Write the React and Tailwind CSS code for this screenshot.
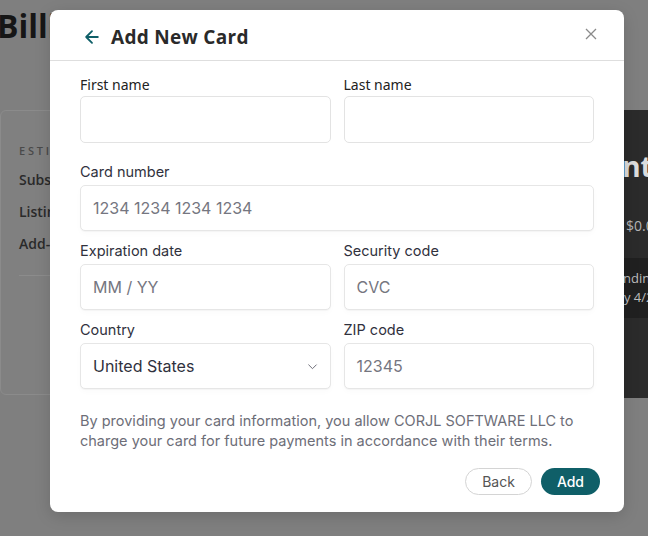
import React from "react";

const stripeFont = { fontFamily: "Inter, 'Liberation Sans', sans-serif" };

function Field({ label, placeholder, value, select }) {
  return (
    <div className="flex flex-col">
      <label className="mb-[3px] h-[20px] text-[14.5px] leading-[20px] text-[#30313d]" style={stripeFont}>
        {label}
      </label>
      <div className="flex h-[46px] items-center justify-between rounded-[5px] border border-[#e6e6e6] bg-white px-[12px] shadow-[0_1px_1px_rgba(0,0,0,0.03),0_3px_6px_rgba(0,0,0,0.02)]">
        <span
          className={`text-[16px] ${value ? "text-[#30313d]" : "text-[#757680]"}`}
          style={stripeFont}
        >
          {value || placeholder}
        </span>
        {select && (
          <svg width="13" height="13" viewBox="0 0 24 24" fill="none" stroke="#6b6b75" strokeWidth="1.8" strokeLinecap="round" strokeLinejoin="round" className="mr-[-1px]">
            <path d="M5 9l7 7 7-7" />
          </svg>
        )}
      </div>
    </div>
  );
}

function Background() {
  return (
    <div className="h-[536px] w-[648px] overflow-hidden bg-[#7f7f7f]" style={{ fontFamily: "'Open Sans', sans-serif" }}>
      <h1 className="ml-[-3px] mt-[6px] h-[40px] text-[32px] font-bold leading-[40px] text-[#161616]">Billing</h1>
      <div className="mt-[64px] flex gap-[24px]">
        <div className="h-[285px] w-[600px] shrink-0 rounded-[6px] border border-[#8b8b8b] bg-[#808080] pl-[18px] pt-[32px]">
          <p className="text-[11px] font-semibold tracking-[0.25em] text-[#4a4a4a]">ESTIMATED</p>
          <p className="mt-[9px] text-[14px] font-semibold text-[#2a2a2a]">Subscription</p>
          <p className="mt-[11px] text-[14px] font-semibold text-[#2a2a2a]">Listings</p>
          <p className="mt-[11px] text-[14px] font-semibold text-[#2a2a2a]">Add-ons</p>
          <div className="mt-[21px] mr-[20px] border-t border-[#8c8c8c]" />
        </div>
        <div className="h-[288px] w-[300px] shrink-0 bg-[#2b2b2b]">
          <p className="mt-[36px] ml-[-80px] h-[40px] text-[28px] font-bold leading-[40px] text-[#dcdcdc]">Current</p>
          <p className="mt-[30px] ml-[2px] h-[20px] text-[14px] leading-[20px] text-[#b5b5b5]">$0.00</p>
          <div className="mt-[22px] h-[60px] bg-[#202020] pt-[11px]">
            <p className="ml-[-16px] text-[13px] leading-[18px] text-[#bdbdbd]">Pending</p>
            <p className="ml-[-8px] text-[13px] leading-[20px] text-[#bdbdbd]">by 4/20</p>
          </div>
        </div>
      </div>
    </div>
  );
}

export default function App() {
  return (
    <div className="relative h-[536px] w-[648px] overflow-hidden">
      <Background />
      <div className="absolute left-[50px] top-[10px] h-[502px] w-[574px] rounded-[8px] bg-white shadow-[0_4px_16px_rgba(0,0,0,0.15)]">
        <div className="flex h-[51px] items-center justify-between border-b border-[#dedede] pl-[32px] pr-[26px]">
          <div className="flex items-center gap-[9px] pt-[4px]">
            <svg width="20" height="20" viewBox="0 0 24 24" fill="none" stroke="#0f5f68" strokeWidth="2.2" strokeLinecap="round" strokeLinejoin="round">
              <path d="M19 12H5M12 19l-7-7 7-7" />
            </svg>
            <h2 className="text-[19px] font-bold tracking-[0.3px] text-[#2a2a2a]" style={{ fontFamily: "'Open Sans', sans-serif" }}>
              Add New Card
            </h2>
          </div>
          <svg width="14" height="14" viewBox="0 0 14 14" stroke="#8a8a8a" strokeWidth="1.3" className="mb-[2px]">
            <path d="M2 2l10 10M12 2L2 12" />
          </svg>
        </div>
        <div className="px-[30px] pt-[14px]">
          <div className="grid grid-cols-2 gap-x-[13px]">
            <div className="flex flex-col">
              <label className="mb-[1px] h-[20px] text-[14px] leading-[20px] text-[#222]" style={{ fontFamily: "'Noto Sans', sans-serif" }}>
                First name
              </label>
              <div className="h-[47px] rounded-[5px] border border-[#e3e3e3] bg-white" />
            </div>
            <div className="flex flex-col">
              <label className="mb-[1px] h-[20px] text-[14px] leading-[20px] text-[#222]" style={{ fontFamily: "'Noto Sans', sans-serif" }}>
                Last name
              </label>
              <div className="h-[47px] rounded-[5px] border border-[#e3e3e3] bg-white" />
            </div>
          </div>
          <div className="mt-[19px]">
            <Field label="Card number" placeholder="1234 1234 1234 1234" />
          </div>
          <div className="mt-[10px] grid grid-cols-2 gap-x-[13px]">
            <Field label="Expiration date" placeholder="MM / YY" />
            <Field label="Security code" placeholder="CVC" />
          </div>
          <div className="mt-[10px] grid grid-cols-2 gap-x-[13px]">
            <Field label="Country" value="United States" select />
            <Field label="ZIP code" placeholder="12345" />
          </div>
          <p className="mt-[22px] text-[14.5px] leading-[20px] text-[#6d6e78]" style={stripeFont}>
            By providing your card information, you allow CORJL SOFTWARE LLC to charge your card for future payments in accordance with their terms.
          </p>
          <div className="mt-[17px] flex justify-end gap-[9px]">
            <button className="h-[27px] rounded-full border border-[#d4d4d4] bg-white px-[16px] text-[14px] text-[#555]" style={stripeFont}>
              Back
            </button>
            <button className="mr-[-6px] h-[27px] rounded-full bg-[#0f5f68] px-[16px] text-[14px] font-medium text-white" style={stripeFont}>
              Add
            </button>
          </div>
        </div>
      </div>
    </div>
  );
}
